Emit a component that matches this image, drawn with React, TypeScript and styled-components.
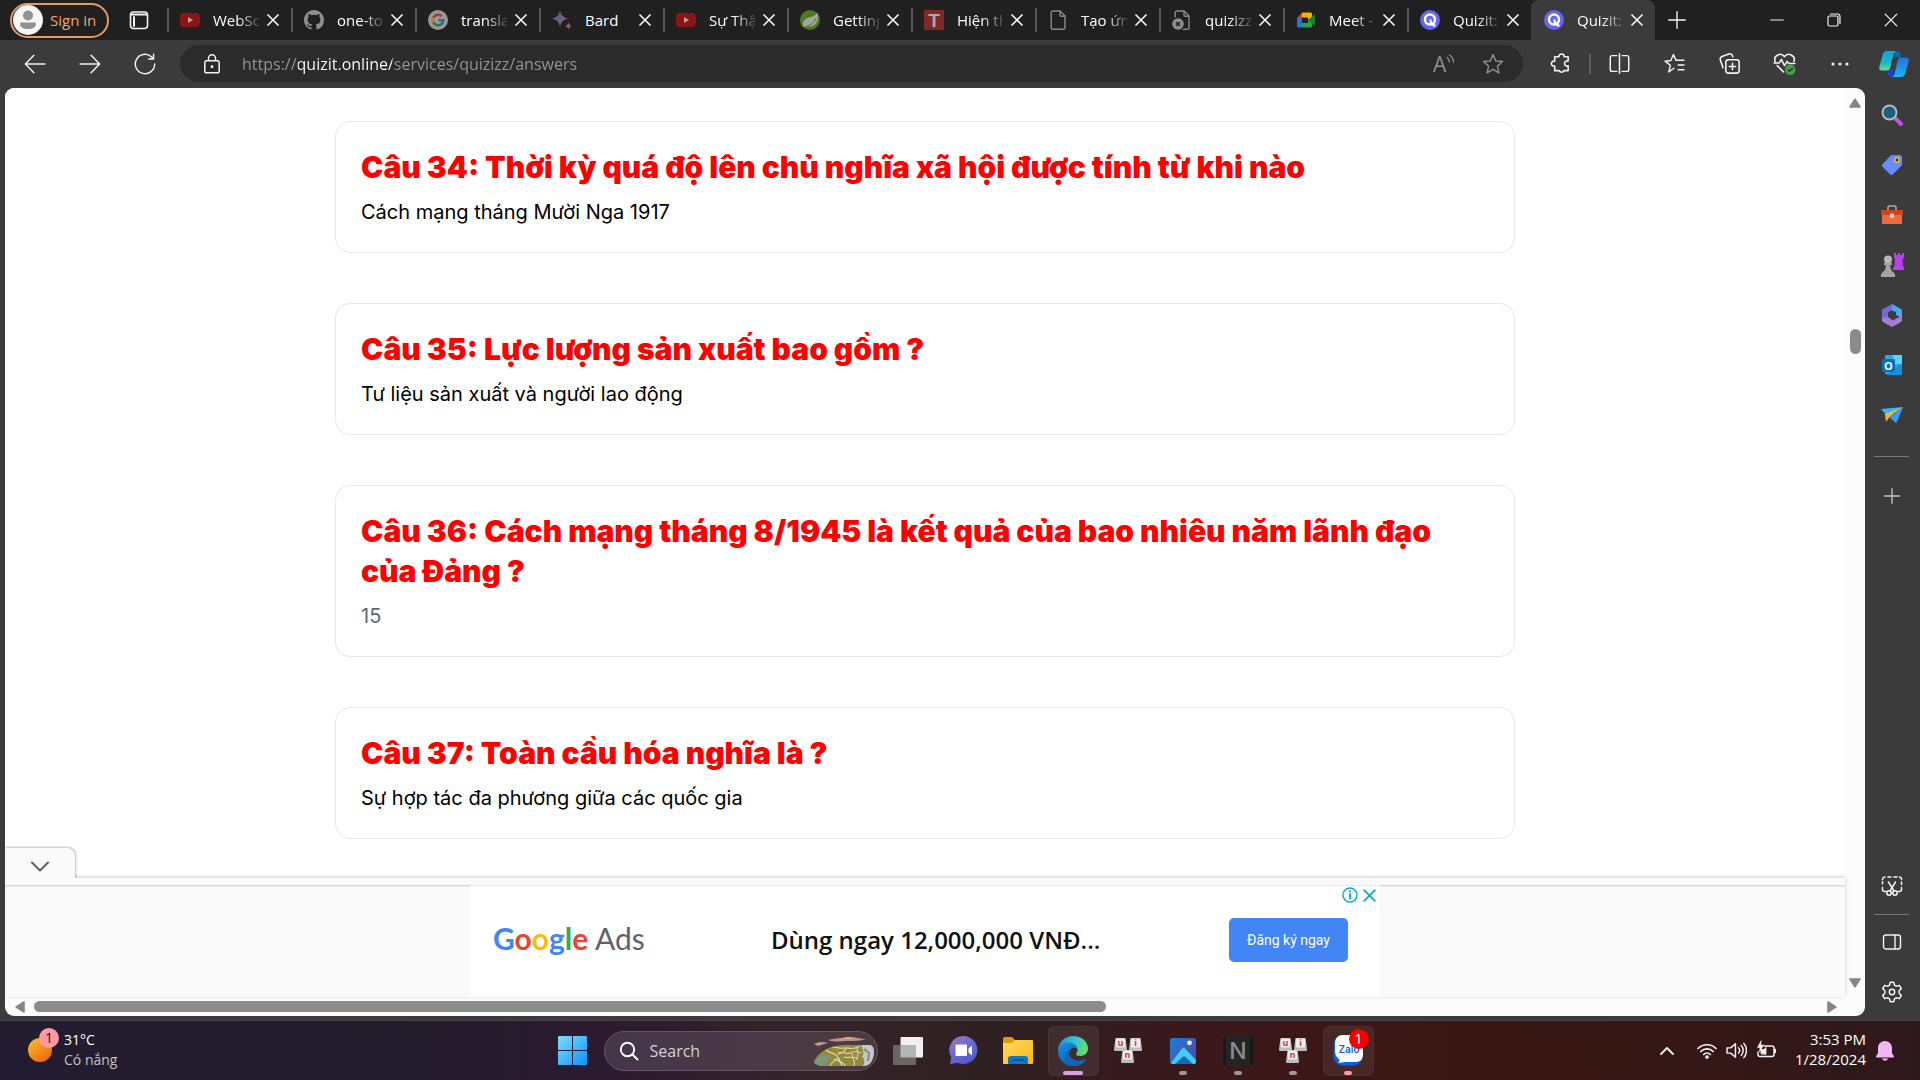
import React from "react";
import styled, { createGlobalStyle, css } from "styled-components";

const GlobalStyle = createGlobalStyle`
  *, *::before, *::after { box-sizing: border-box; }
  html, body { margin: 0; padding: 0; background: #3b3b3b; }
  body { font-family: "Segoe UI", "Open Sans", "Noto Sans", sans-serif; font-size: 14px; }
  button, input { font: inherit; color: inherit; }
  button { background: none; border: 0; padding: 0; cursor: pointer; }
  h2, p { margin: 0; }
  svg { display: block; flex: none; }
`;

/* ---------- browser frame ---------- */

const Shell = styled.div`
  display: flex;
  flex-direction: column;
  height: 100vh;
  overflow: hidden;
  background: #3b3b3b;
`;

const TabBar = styled.header`
  display: flex;
  align-items: stretch;
  height: 40px;
  flex: none;
  background: #202020;
  color: #fff;
`;

const SignIn = styled.button`
  display: flex;
  align-items: center;
  align-self: center;
  gap: 7px;
  width: 99px;
  height: 35px;
  margin: 0 12px 0 10px;
  padding-left: 1px;
  border: 2px solid #e59a63;
  border-radius: 18px;
  color: #f3a56d;
  font-size: 15px;
  white-space: nowrap;
`;

const IconButton = styled.button<{ $w?: number; $h?: number; $color?: string }>`
  display: flex;
  flex: none;
  align-items: center;
  justify-content: center;
  width: ${(p) => p.$w ?? 55}px;
  height: ${(p) => (p.$h ? `${p.$h}px` : "auto")};
  color: ${(p) => p.$color ?? "#f2f2f2"};
`;

const Tab = styled.div<{ $active?: boolean }>`
  display: flex;
  flex: none;
  align-items: center;
  width: 124px;
  padding-left: 13px;
  position: relative;
  ${(p) =>
    p.$active
      ? css`
          background: #3b3b3b;
          border-radius: 8px 8px 0 0;
        `
      : css`
          &::before {
            content: "";
            position: absolute;
            left: 0;
            top: 8px;
            width: 2px;
            height: 24px;
            background: #555;
          }
        `}
`;

const TabTitle = styled.span`
  width: 46px;
  margin: 0 7px 0 13px;
  overflow: hidden;
  white-space: nowrap;
  line-height: 24px;
  font-size: 15px;
  mask-image: linear-gradient(90deg, #000 24px, transparent 50px);
`;

const BardTitle = styled(TabTitle)`
  mask-image: none;
`;

const Push = styled.div`
  flex: 1;
`;

const Toolbar = styled.nav`
  display: flex;
  align-items: stretch;
  height: 48px;
  flex: none;
  padding: 5px 0 6px 7px;
`;

const AddressBar = styled.label`
  display: flex;
  flex: 1;
  align-items: center;
  min-width: 0;
  margin: 0 10px 0 8px;
  padding: 0 6px 0 22px;
  border-radius: 19px;
  background: #2b2b2b;
  color: #f2f2f2;
`;

const Address = styled.input`
  flex: 1;
  min-width: 0;
  height: 30px;
  margin-left: 20px;
  padding: 0;
  border: 0;
  outline: 0;
  font-size: 16px;
  background: linear-gradient(90deg, #969696 56px, #fff 56px, #fff 150px, #969696 150px);
  background-clip: text;
  -webkit-background-clip: text;
  -webkit-text-fill-color: transparent;
`;

const ToolDivider = styled.span`
  align-self: center;
  width: 2px;
  height: 20px;
  margin: 0 1px;
  background: #5c5c5c;
`;

const Body = styled.div`
  display: flex;
  flex: 1;
  min-height: 0;
  padding-left: 5px;
`;

const Viewport = styled.div`
  display: grid;
  flex: 1;
  min-width: 0;
  grid-template: minmax(0, 1fr) 19px / minmax(0, 1fr) 20px;
  margin-bottom: 4px;
  overflow: hidden;
  border-radius: 9px;
  background: #fcfcfc;
`;

/* ---------- page ---------- */

const Page = styled.div`
  display: flex;
  flex-direction: column;
  min-height: 0;
  background: #fff;
`;

const Answers = styled.main`
  display: flex;
  flex: 1;
  flex-direction: column;
  align-items: center;
  gap: 50px;
  min-height: 0;
  padding: 33px 20px 0;
  overflow: hidden;
`;

const Card = styled.article`
  display: flex;
  flex: none;
  flex-direction: column;
  gap: 9px;
  width: 100%;
  max-width: 1180px;
  padding: 25px 25px 24px;
  border: 1px solid #e5e7eb;
  border-radius: 15px;
  font-family: Inter, sans-serif;
`;

const Question = styled.h2`
  color: #f00;
  font-size: 30px;
  font-weight: 900;
  line-height: 40px;
`;

const Answer = styled.p<{ $muted?: boolean }>`
  color: ${(p) => (p.$muted ? "#5f6672" : "#000")};
  font-size: 20px;
  line-height: 32px;
`;

const AdDock = styled.aside`
  position: relative;
  flex: none;
  padding-top: 7px;
  background: #fafafa;
  box-shadow: 0 -1px 4px rgba(0, 0, 0, 0.2);
`;

const CollapseTab = styled.button`
  position: absolute;
  left: 0;
  top: -30px;
  display: flex;
  align-items: center;
  justify-content: center;
  width: 70px;
  height: 37px;
  border-radius: 0 8px 0 0;
  background: #fafafa;
  box-shadow: 1px -1px 2px rgba(0, 0, 0, 0.25);
  clip-path: inset(-4px -4px 7px 0);
  color: #616161;
`;

const AdStrip = styled.div`
  display: flex;
  justify-content: center;
  box-shadow: inset 0 2px 2px -1px rgba(0, 0, 0, 0.2);
`;

const Ad = styled.div`
  position: relative;
  display: flex;
  align-items: center;
  width: 910px;
  height: 112px;
  padding: 0 32px 3px 23px;
  border-top: 1px solid #e8e8e8;
  background: #fff;
  font-family: Lato, sans-serif;
`;

const AdLogo = styled.span`
  width: 278px;
  padding-bottom: 4px;
  color: #5f6368;
  font-size: 30px;
  line-height: 40px;
  white-space: nowrap;
`;

const Letter = styled.span<{ $c: string }>`
  color: ${(p) => p.$c};
  font-family: Lato, sans-serif;
  font-weight: 700;
`;

const AdText = styled.p`
  flex: 1;
  color: #111;
  font-family: "Open Sans", sans-serif;
  font-size: 24px;
  font-weight: 600;
  line-height: 32px;
  white-space: nowrap;
`;

const AdButton = styled.button`
  width: 119px;
  height: 44px;
  border-radius: 5px;
  background: #4285f4;
  color: #fff;
  font-family: Roboto, sans-serif;
  font-size: 14px;
`;

const AdChoices = styled.div`
  position: absolute;
  top: 0;
  right: 3px;
  display: flex;
  gap: 4px;
`;

/* ---------- scroll bars ---------- */

const VBar = styled.div`
  display: grid;
  grid-template-rows: 12px 221fr 25px 625fr 12px;
  justify-items: center;
  padding: 9px 0 8px;
`;

const VThumb = styled.div`
  grid-row: 3;
  width: 11px;
  border-radius: 6px;
  background: #8b8b8b;
`;

const HBar = styled.div`
  display: grid;
  grid-template-columns: 9px 10fr 1072fr 721fr 9px;
  align-items: center;
  padding: 0 9px 0 10px;
`;

const HThumb = styled.div`
  grid-column: 3;
  height: 11px;
  border-radius: 6px;
  background: #8b8b8b;
`;

const ArrowCell = styled.span<{ $last?: boolean; $across?: boolean }>`
  display: flex;
  align-items: center;
  justify-content: center;
  ${(p) => p.$last && (p.$across ? "grid-column: 5;" : "grid-row: 5;")}
`;

/* ---------- side bar ---------- */

const Sidebar = styled.nav`
  display: flex;
  flex: none;
  flex-direction: column;
  align-items: center;
  width: 55px;
  padding: 2px 2px 3px 0;
`;

const SideDivider = styled.hr<{ $tight?: boolean }>`
  width: 35px;
  height: 1px;
  margin: ${(p) => (p.$tight ? "3px 0 2px" : "16px 0 14px")};
  border: 0;
  background: #777;
`;

/* ---------- task bar ---------- */

const Taskbar = styled.footer`
  display: grid;
  grid-template-columns: 1fr auto 1fr;
  flex: none;
  height: 60px;
  border-top: 1px solid #494347;
  background: linear-gradient(
    90deg,
    #241c30 0%,
    #211d2d 20%,
    #2c1a30 31%,
    #35232a 42%,
    #2f2021 52%,
    #3c171b 64%,
    #3b1713 76%,
    #341716 90%,
    #2d191c 100%
  );
  color: #fff;
`;

const Weather = styled.button`
  display: flex;
  align-items: center;
  justify-self: start;
  gap: 4px;
  padding: 0 0 2px 24px;
  text-align: left;
`;

const WeatherText = styled.span`
  display: flex;
  flex-direction: column;
  font-size: 14px;
  line-height: 20px;
  color: #fff;
`;

const Dim = styled.span`
  color: #c4c1c9;
`;

const Dock = styled.div`
  display: flex;
  align-items: center;
`;

const SearchBox = styled.label`
  display: flex;
  align-items: center;
  gap: 11px;
  width: 274px;
  height: 40px;
  margin: 0 3px 0 4px;
  padding: 0 3px 0 14px;
  border: 1px solid #655564;
  border-radius: 20px;
  background: linear-gradient(90deg, #45354a, #4b3b47 60%, #493b3d);
`;

const SearchInput = styled.input`
  flex: 1;
  min-width: 0;
  padding: 0;
  border: 0;
  outline: 0;
  background: none;
  font-size: 16px;
  &::placeholder {
    color: #d6d0d6;
    opacity: 1;
  }
`;

const AppCell = styled.button<{ $open?: boolean; $mark?: string; $wide?: boolean }>`
  position: relative;
  display: flex;
  align-items: center;
  justify-content: center;
  width: 51px;
  height: 50px;
  margin: 0 2px;
  border-radius: 6px;
  ${(p) => p.$open && "background: rgba(255, 255, 255, 0.07); box-shadow: inset 0 0 0 1px rgba(255, 255, 255, 0.04);"}
  &::after {
    content: "";
    display: ${(p) => (p.$mark ? "block" : "none")};
    position: absolute;
    bottom: 1px;
    width: ${(p) => (p.$wide ? 20 : 8)}px;
    height: 4px;
    border-radius: 2px;
    background: ${(p) => p.$mark};
  }
`;

const Count = styled.span`
  position: absolute;
  top: 3px;
  right: 5px;
  width: 20px;
  height: 20px;
  border-radius: 10px;
  background: #f90000;
  font-size: 14px;
  line-height: 20px;
  text-align: center;
`;

const Tray = styled.div`
  display: flex;
  align-items: center;
  justify-content: flex-end;
  padding-right: 23px;
`;

const Clock = styled.time`
  margin: 0 7px 0 13px;
  padding-bottom: 3px;
  font-size: 15px;
  line-height: 20px;
  text-align: right;
  white-space: pre-line;
`;

const WeatherIcon = styled.span`
  position: relative;
  width: 36px;
  height: 40px;
`;

const WeatherCount = styled.span`
  position: absolute;
  top: -2px;
  right: 1px;
  width: 20px;
  height: 20px;
  border-radius: 10px;
  background: #ff98a2;
  color: #2a1014;
  font-size: 14px;
  line-height: 20px;
  text-align: center;
`;

/* ---------- drawings ---------- */

type LineProps = { s?: number; w?: number; box?: number; children: React.ReactNode };
const Line = ({ s = 20, w = 1.3, box = 20, children }: LineProps) => (
  <svg width={s} height={s} viewBox={`0 0 ${box} ${box}`} fill="none" stroke="currentColor" strokeWidth={w} strokeLinecap="round" strokeLinejoin="round" aria-hidden="true">
    {children}
  </svg>
);

const YouTube = () => (
  <svg width="20" height="20" viewBox="0 0 20 20">
    <rect x="0" y="3" width="20" height="14" rx="3.5" fill="#8a1416" />
    <path d="M8 7l5.2 3L8 13z" fill="#b9a0a0" />
  </svg>
);
const GitHub = () => (
  <svg width="20" height="20" viewBox="0 0 16 16" fill="#8f8f8f">
    <path d="M8 0C3.58 0 0 3.58 0 8c0 3.54 2.29 6.53 5.47 7.59.4.07.55-.17.55-.38 0-.19-.01-.82-.01-1.49-2.01.37-2.53-.49-2.69-.94-.09-.23-.48-.94-.82-1.13-.28-.15-.68-.52-.01-.53.63-.01 1.08.58 1.23.82.72 1.21 1.87.87 2.33.66.07-.52.28-.87.51-1.07-1.78-.2-3.64-.89-3.64-3.95 0-.87.31-1.59.82-2.15-.08-.2-.36-1.02.08-2.12 0 0 .67-.21 2.2.82a7.6 7.6 0 0 1 4 0c1.53-1.04 2.2-.82 2.2-.82.44 1.1.16 1.92.08 2.12.51.56.82 1.27.82 2.15 0 3.07-1.87 3.75-3.65 3.95.29.25.54.73.54 1.48 0 1.07-.01 1.93-.01 2.2 0 .21.15.46.55.38A8 8 0 0 0 16 8c0-4.42-3.58-8-8-8z" />
  </svg>
);
const GoogleMark = () => (
  <svg width="20" height="20" viewBox="0 0 20 20" fill="none" strokeWidth="2.6">
    <circle cx="10" cy="10" r="10" fill="#989898" />
    <path d="M13.7 6.2A5.3 5.3 0 0 0 5.3 7.6" stroke="#a5382f" />
    <path d="M5.3 7.6a5.3 5.3 0 0 0 0 4.8" stroke="#b08618" />
    <path d="M5.3 12.4a5.3 5.3 0 0 0 8.2 1.6" stroke="#2c7a3f" />
    <path d="M13.5 14a5.3 5.3 0 0 0 1.7-3.8H10.3" stroke="#3562a8" />
  </svg>
);
const BardMark = () => (
  <svg width="20" height="20" viewBox="0 0 20 20">
    <defs>
      <linearGradient id="bard" x1="0" y1="0" x2="1" y2="1">
        <stop offset="0.2" stopColor="#2f6ba0" />
        <stop offset="0.8" stopColor="#a2506a" />
      </linearGradient>
    </defs>
    <path d="M8 0c1 5 3 7 8 8.500c-5 1.500-7 3.500-8 8.500c-1-5-3-7-8-8.500c5-1.500 7-3.500 8-8.500z" fill="url(#bard)" />
    <path d="M16.500 12c.5 2.300 1.300 3.300 3.500 4c-2.200.7-3 1.700-3.500 4c-.5-2.300-1.300-3.300-3.500-4c2.200-.7 3-1.700 3.500-4z" fill="#a05568" />
  </svg>
);
const Spring = () => (
  <svg width="20" height="20" viewBox="0 0 20 20">
    <circle cx="10" cy="10" r="10" fill="#4d7a23" />
    <path d="M17.500 2.500c1.500 7-.5 14-8 14c-2 0-4 .3-5.500 1c-2.500-3-1-8 3.500-9.500c4-1.300 7-1 10-5.500z" fill="#a3a3a3" />
    <path d="M4 17c5-.5 10-4 12-9" stroke="#4d7a23" strokeWidth="1" fill="none" />
  </svg>
);
const TMark = () => (
  <svg width="20" height="20" viewBox="0 0 20 20">
    <rect width="20" height="20" fill="#7f2a24" />
    <text x="10" y="17" textAnchor="middle" fontFamily="Liberation Sans, sans-serif" fontWeight="700" fontSize="19" fill="#b0a5a4">T</text>
  </svg>
);
const Doc = ({ broken }: { broken?: boolean }) => (
  <svg width="20" height="20" viewBox="0 0 20 20" fill="none" stroke="#8a8a8a" strokeWidth="1.400">
    <path d="M5 1h7l5 5v11.500a1.800 1.800 0 0 1-1.800 1.800H5a1.800 1.800 0 0 1-1.800-1.800V2.800A1.800 1.800 0 0 1 5 1zM12 1v4a1.200 1.200 0 0 0 1.200 1.200H17" />
    {broken && (
      <>
        <circle cx="6" cy="14" r="6.500" fill="#8f8f8f" stroke="#202020" />
        <path d="M4 12l4 4M8 12l-4 4" stroke="#202020" strokeWidth="1.600" />
      </>
    )}
  </svg>
);
const Meet = () => (
  <svg width="20" height="20" viewBox="0 0 20 20">
    <path d="M1 8l5-5.500V8z" fill="#e3382c" />
    <path d="M6 2.500h8.500a1.500 1.500 0 0 1 1.500 1.500v5l-4 1V7.500H6z" fill="#f5b400" />
    <path d="M1 8h5v9.500H2.500A1.500 1.500 0 0 1 1 16z" fill="#2074e8" />
    <path d="M6 13h6v-3l4 1v5a1.500 1.500 0 0 1-1.500 1.500H6z" fill="#20a44b" />
    <path d="M12 10l6-5.200c.6-.4 1-.1 1 .5v9.400c0 .6-.4.9-1 .5z" fill="#168039" />
  </svg>
);
const Quizit = () => (
  <svg width="20" height="20" viewBox="0 0 20 20" fill="none">
    <circle cx="10" cy="10" r="10" fill="#6366f1" />
    <circle cx="10" cy="9.500" r="5" stroke="#fff" strokeWidth="2.400" />
    <path d="M10.500 10.500c.3 3 1.500 4.500 4 5" stroke="#fff" strokeWidth="2.300" strokeLinecap="round" />
  </svg>
);

const CloseX = ({ s = 12, w = 1.7 }: { s?: number; w?: number }) => (
  <Line s={s} box={12} w={w}>
    <path d="M1 1l10 10M11 1L1 11" />
  </Line>
);

const tabs: { title: string; icon: React.ReactNode }[] = [
  { title: "WebSoc", icon: <YouTube /> },
  { title: "one-to-", icon: <GitHub /> },
  { title: "transla", icon: <GoogleMark /> },
  { title: "Bard", icon: <BardMark /> },
  { title: "Sự Thậ", icon: <YouTube /> },
  { title: "Getting", icon: <Spring /> },
  { title: "Hiện th", icon: <TMark /> },
  { title: "Tạo ứn", icon: <Doc /> },
  { title: "quizizz", icon: <Doc broken /> },
  { title: "Meet -", icon: <Meet /> },
  { title: "Quizit:", icon: <Quizit /> },
  { title: "Quizit:", icon: <Quizit /> },
];

const STAR = "M10 1.500l2.500 5.700 6.200.6-4.700 4.100 1.400 6.100L10 14.800 4.600 18l1.400-6.100L1.300 7.800l6.200-.6z";

const Copilot = () => (
  <svg width="30" height="28" viewBox="0 0 30 28">
    <defs>
      <linearGradient id="cpA" x1="0" y1="0" x2="0" y2="1">
        <stop offset="0.2" stopColor="#12a5e4" />
        <stop offset="0.600" stopColor="#20b8c4" />
        <stop offset="1" stopColor="#68dd9c" />
      </linearGradient>
      <linearGradient id="cpB" x1="0" y1="0" x2="0" y2="1">
        <stop offset="0" stopColor="#2a6fe0" />
        <stop offset="1" stopColor="#16b7fa" />
      </linearGradient>
    </defs>
    <path d="M14 1h4c2 0 3 1 3.500 3L22 7h-6z" fill="#0a6aa0" />
    <path d="M8 19h7l-2 8c-2 0-3.500-1-4-3z" fill="#1741d8" />
    <path d="M8 1h9c-2 1-2.500 3-3 5l-2.500 11c-.6 2-1.500 3.500-3.500 3.500H3c-2.500 0-3.200-1.500-2.600-4L3.600 5C4.300 2.500 5.500 1 8 1z" fill="url(#cpA)" />
    <path d="M22 7.500h5c2.500 0 3.200 1.500 2.600 4l-3.200 11.500c-.7 2.500-1.900 4-4.400 4h-9c2-1 2.500-3 3-5l2.500-11c.6-2 1.500-3.500 3.500-3.500z" fill="url(#cpB)" />
  </svg>
);

const sideApps: { name: string; icon: React.ReactNode }[] = [
  {
    name: "Search",
    icon: (
      <svg width="22" height="22" viewBox="0 0 22 22">
        <path d="M15 15l5 5" stroke="#c94df5" strokeWidth="4" strokeLinecap="round" />
        <path d="M12.500 12.500l3 3" stroke="#8a8a8a" strokeWidth="2" />
        <circle cx="8.500" cy="8.500" r="7" fill="#1c5f80" stroke="#b9b9b9" strokeWidth="2" />
      </svg>
    ),
  },
  {
    name: "Shopping",
    icon: (
      <svg width="22" height="22" viewBox="0 0 22 22">
        <path d="M11 1h7.500A2.500 2.500 0 0 1 21 3.500V10c0 1-.3 1.500-1 2.200l-8 8c-1 1-2 1-3 0L1.700 13c-1-1-1-2 0-3l7.500-8c.6-.7 1-1 1.800-1z" fill="#6a8cfb" />
        <circle cx="16" cy="6" r="2.200" fill="#333" stroke="#ecc125" strokeWidth="1.500" />
      </svg>
    ),
  },
  {
    name: "Tools",
    icon: (
      <svg width="24" height="20" viewBox="0 0 24 20">
        <path d="M8 5V2.500A1.500 1.500 0 0 1 9.500 1h5A1.500 1.500 0 0 1 16 2.500V5" fill="none" stroke="#aaa" strokeWidth="1.600" />
        <rect x="2" y="9" width="20" height="10" rx="1" fill="#ef6a3d" />
        <rect x="1" y="5" width="22" height="5" rx="1" fill="#d5431a" />
        <rect x="10" y="8.500" width="4" height="4.500" rx="1" fill="#d6d6d6" />
      </svg>
    ),
  },
  {
    name: "Games",
    icon: (
      <svg width="24" height="24" viewBox="0 0 24 24">
        <path d="M14 0h2v2h2V0h2v2h2V0h2v5l-1.500 1 .5 7 1.500 2v2H13v-2l1.500-2 .5-7L14 5z" fill="#b840f0" />
        <circle cx="8" cy="6.500" r="4" fill="#b8b8b8" />
        <path d="M4 10h8v2h-2l1 5 4 4v3H1v-3l4-4 1-5H4z" fill="#a3a3a3" />
      </svg>
    ),
  },
  {
    name: "Microsoft 365",
    icon: (
      <svg width="22" height="23" viewBox="0 0 22 23">
        <path d="M11 0l9 5c1 .6 1 1 1 2v7l-6-3V8L7 5z" fill="#48a9ee" />
        <path d="M11 0L2 5C1 5.600 1 6 1 7v9l6-3V8.500l4-2.500z" fill="#6f6bd6" />
        <path d="M1 14v2c0 1 .3 1.400 1 2l8 4.500c.7.400 1.300.400 2 0l8-4.500c.7-.5 1-1 1-2v-5l-9 5.500-5-3.500z" fill="#a77cd0" />
      </svg>
    ),
  },
  {
    name: "Outlook",
    icon: (
      <svg width="22" height="22" viewBox="0 0 22 22">
        <rect x="4" y="1" width="17" height="19" rx="1" fill="#28a8ea" />
        <path d="M12 1h9v9h-9z" fill="#50d9ff" />
        <path d="M21 10v10a1 1 0 0 1-1 1H5l8-7z" fill="#1490df" />
        <rect x="1" y="5" width="13" height="13" rx="1" fill="#0f6cbd" />
        <text x="7.500" y="15.500" textAnchor="middle" fontFamily="Open Sans, sans-serif" fontWeight="700" fontSize="11" fill="#fff">O</text>
      </svg>
    ),
  },
  {
    name: "Drop",
    icon: (
      <svg width="22" height="18" viewBox="0 0 22 18">
        <path d="M0 3L22 1 5 9z" fill="#35b7f5" />
        <path d="M22 1L16 16l-7-5z" fill="#2f86ea" />
        <path d="M22 1L4 8l1 8c3-5 7-9 17-15z" fill="#f5b92e" />
        <path d="M22 1L8 11l7 6z" fill="#3c9af2" />
      </svg>
    ),
  },
];

const Keys = () => (
  <svg width="28" height="26" viewBox="0 0 28 26">
    {[
      [0, 0, "u"],
      [15, 0, "i"],
      [7, 12, "n"],
    ].map(([x, y, t]) => (
      <g key={t as string} transform={`translate(${x} ${y})`}>
        <path d="M1.500 0h10l1.500 11.500c0 1-.5 1.500-1.500 1.500h-10C.5 13 0 12.500 0 11.500z" fill="#bdbdbd" />
        <rect x="1.800" y="0.500" width="9.500" height="9" rx="1.500" fill="#ededed" />
        <text x="6.500" y="8" textAnchor="middle" fontFamily="Open Sans, sans-serif" fontWeight="700" fontSize="9" fill="#e8323c">{t}</text>
      </g>
    ))}
  </svg>
);

const Zalo = () => (
  <svg width="31" height="31" viewBox="0 0 31 31">
    <rect x="0.500" y="0.500" width="29" height="30" rx="9" fill="#0a62e8" />
    <path d="M10 0h12c6 0 8 3 8 8v11c0 6-3 8-8 8H12c-2 0-4 1-7 1 1-1 2-2 1-4-3-2-4-5-4-8V9c0-6 3-9 8-9z" fill="#fff" />
    <text x="16" y="18" textAnchor="middle" fontFamily="Inter, sans-serif" fontWeight="600" fontSize="10" fill="#0a62e8">Zalo</text>
  </svg>
);

const Earth = () => (
  <svg width="60" height="32" viewBox="0 0 60 32">
    <defs>
      <clipPath id="hill">
        <path d="M0 27C6 13 22 9 38 10h17c4 0 5 3 5 8-1 8-4 12-9 13H8C4 31 1 29 0 27z" />
      </clipPath>
    </defs>
    <path d="M14 5c6-2 12-1 18-3 5-1 8 1 20 2-6 2-12 2-18 2s-14 2-20-1z" fill="#b98f98" />
    <path d="M22 4c6 0 8-2 14-1 3 0 5 1 9 1z" fill="#e0a782" />
    <path d="M0 9c4-2 8-3 14-1-4 1-7 2-10 3z" fill="#c9977f" />
    <g clipPath="url(#hill)">
      <rect width="60" height="32" fill="#95893a" />
      <path d="M0 24c8-4 12-5 16-2l-6 9H0z" fill="#77987c" />
      <path d="M48 8c-2 6 4 8 0 14 4 2 2 8 0 10h12V8z" fill="#c2c4da" />
      <g fill="none" stroke="#d8d6b4" strokeWidth="1.100">
        <path d="M12 15c4 4 10 2 12 8s6 4 8 9M18 12c4 0 8 2 12 1s8 3 16-2M24 18c6-2 8 2 12 0s6-2 12 0M16 31c2-4 4-6 10-8M30 22c4 2 8-2 14 2M32 13c-2 5-4 5-8 6M38 18c0 6 4 8 2 13M20 24c4 2 6 1 8 7M44 12c-3 4 3 7-2 12" />
      </g>
      <path d="M50 14l5 4-1 8" stroke="#9a8b45" strokeWidth="2" fill="none" />
    </g>
  </svg>
);

const questions = [
  { q: "Câu 34: Thời kỳ quá độ lên chủ nghĩa xã hội được tính từ khi nào", a: "Cách mạng tháng Mười Nga 1917" },
  { q: "Câu 35: Lực lượng sản xuất bao gồm ?", a: "Tư liệu sản xuất và người lao động" },
  { q: "Câu 36: Cách mạng tháng 8/1945 là kết quả của bao nhiêu năm lãnh đạo của Đảng ?", a: "15", muted: true },
  { q: "Câu 37: Toàn cầu hóa nghĩa là ?", a: "Sự hợp tác đa phương giữa các quốc gia" },
];

const google: [string, string][] = [
  ["G", "#4285f4"],
  ["o", "#ea4335"],
  ["o", "#fbbc05"],
  ["g", "#4285f4"],
  ["l", "#34a853"],
  ["e", "#ea4335"],
];

const Triangle = ({ turn }: { turn: number }) => (
  <svg width="12" height="12" viewBox="0 0 12 12">
    <path d="M6 2.200L11 10H1z" fill="#858585" stroke="#858585" strokeWidth="1.600" strokeLinejoin="round" transform={`rotate(${turn} 6 6)`} />
  </svg>
);

export default function App() {
  return (
    <Shell>
      <GlobalStyle />
      <TabBar>
        <SignIn>
          <svg width="30" height="30" viewBox="0 0 30 30">
            <circle cx="15" cy="15" r="15" fill="#f7f7f7" />
            <circle cx="15" cy="10.500" r="5" fill="#929292" />
            <path d="M8 17.500h14c.8 0 1 .4 1 1.200C23 22.500 19.500 24 15 24s-8-1.500-8-5.300c0-.8.200-1.200 1-1.200z" fill="#929292" />
          </svg>
          Sign in
        </SignIn>
        <IconButton $w={36} aria-label="Workspaces">
          <Line s={20} w={1.6}>
            <rect x="1.500" y="2" width="17" height="16.500" rx="3" />
            <path d="M2 4.500h16M5 7v9" strokeWidth="2" />
          </Line>
        </IconButton>
        <IconButton as="span" $w={10} />
        {tabs.map((t, i) => (
          <Tab key={i} $active={i === tabs.length - 1}>
            {t.icon}
            {t.title === "Bard" ? <BardTitle>{t.title}</BardTitle> : <TabTitle>{t.title}</TabTitle>}
            <IconButton $w={14} $h={24} aria-label="Close tab">
              <CloseX />
            </IconButton>
          </Tab>
        ))}
        <IconButton $w={44} aria-label="New tab">
          <Line s={18} box={18} w={1.4}>
            <path d="M9 0.700v16.600M.7 9h16.600" />
          </Line>
        </IconButton>
        <Push />
        <IconButton $w={57} aria-label="Minimize">
          <Line s={14} box={14} w={1.2}>
            <path d="M.7 7h12.600" />
          </Line>
        </IconButton>
        <IconButton $w={57} aria-label="Restore">
          <Line s={14} box={14} w={1.2}>
            <rect x="1" y="3" width="10" height="10" rx="1.500" />
            <path d="M3.500 1h7A2.500 2.500 0 0 1 13 3.500v7" />
          </Line>
        </IconButton>
        <IconButton $w={58} aria-label="Close">
          <CloseX s={14} w={1.1} />
        </IconButton>
      </TabBar>

      <Toolbar>
        <IconButton aria-label="Back">
          <Line s={22}>
            <path d="M19 10H1.500M9 2L1.200 10 9 18" />
          </Line>
        </IconButton>
        <IconButton aria-label="Forward">
          <Line s={22}>
            <path d="M1 10h17.500M11 2l7.800 8L11 18" />
          </Line>
        </IconButton>
        <IconButton aria-label="Refresh">
          <Line s={22}>
            <path d="M18.800 10a8.800 8.800 0 1 1-3-6.600l1.700 1.800M17.800 1v4.500h-4.500" />
          </Line>
        </IconButton>
        <AddressBar>
          <Line s={20} w={1.5}>
            <rect x="2.800" y="6.800" width="14.400" height="12" rx="1.800" />
            <path d="M6.500 6.500V4.200a3.500 3.500 0 0 1 7 0v2.300" />
            <circle cx="10" cy="12.800" r="0.700" fill="currentColor" />
          </Line>
          <Address aria-label="Address" defaultValue="https://quizit.online/services/quizizz/answers" />
          <IconButton $w={49} $color="#8f8f8f" aria-label="Read aloud">
            <svg width="22" height="22" viewBox="0 0 22 22" fill="none" stroke="currentColor" strokeWidth="1.300" strokeLinecap="round">
              <text x="0" y="19" fontFamily="Open Sans, sans-serif" fontSize="21" fontWeight="400" fill="currentColor" stroke="none">A</text>
              <path d="M14 4.500c1.500 1 2.300 2.500 2.400 4.500M16.500 2c2.400 1.500 3.800 4 4 7" />
            </svg>
          </IconButton>
          <IconButton $w={49} $color="#8f8f8f" aria-label="Add to favorites">
            <Line s={22}>
              <path d={STAR} />
            </Line>
          </IconButton>
        </AddressBar>
        <IconButton aria-label="Extensions">
          <Line s={21} w={1.5}>
            <path d="M4.500 3.500h4a2.500 2.500 0 0 1 5 0h3.800v4.200a2.500 2.500 0 1 0 0 4.600v4.500h-4a2.500 2.500 0 0 1-4.600 0H4.500v-4.300a2.500 2.500 0 1 1 0-4.800z" />
          </Line>
        </IconButton>
        <ToolDivider />
        <IconButton aria-label="Split screen">
          <Line s={21} w={1.4}>
            <path d="M7.500 2.500H3A1.800 1.800 0 0 0 1.200 4.300v11.400A1.800 1.800 0 0 0 3 17.500h4.500M12.500 2.500H17a1.800 1.800 0 0 1 1.800 1.800v11.400a1.800 1.800 0 0 1-1.800 1.800h-4.500M10 .8v18.400" />
          </Line>
        </IconButton>
        <IconButton aria-label="Favorites">
          <Line s={21} w={1.4}>
            <path d="M9.500 14.500L4.600 18l1.400-6.300L1 7.800l5.500-.6L9 1.500l2.500 5.500h7.500M13.500 11.500h5.500M13.500 16h5.500" />
          </Line>
        </IconButton>
        <IconButton aria-label="Collections">
          <Line s={21} w={1.5}>
            <rect x="6.500" y="6.500" width="12.700" height="12.700" rx="2.500" />
            <path d="M12.800 9.800v6M9.800 12.800h6M3.800 14L1.200 6.500C.9 5 1.400 4 2.800 3.300L9.500.9c1.500-.4 2.500 0 3.200 1.400l.5 1.300" />
          </Line>
        </IconButton>
        <IconButton aria-label="Browser essentials">
          <Line s={23} w={1.5} box={22}>
            <path d="M2 9C0 3 8 0 11 4.500C14 0 22 3 20 9M4 13l6 6M1 10.500h5l2-3.500 3 6 2.500-4 1.500 2h6" />
            <circle cx="16.500" cy="17" r="5" fill="#46a049" stroke="none" />
            <path d="M14.300 17l1.500 1.500 3-3" stroke="#203a20" strokeWidth="1.300" />
          </Line>
        </IconButton>
        <IconButton aria-label="Settings and more">
          <svg width="18" height="4" viewBox="0 0 18 4" fill="currentColor">
            <circle cx="2" cy="2" r="1.600" />
            <circle cx="9" cy="2" r="1.600" />
            <circle cx="16" cy="2" r="1.600" />
          </svg>
        </IconButton>
        <IconButton $w={53} aria-label="Copilot">
          <Copilot />
        </IconButton>
      </Toolbar>

      <Body>
        <Viewport>
          <Page>
            <Answers>
              {questions.map((item) => (
                <Card key={item.q}>
                  <Question>{item.q}</Question>
                  <Answer $muted={item.muted}>{item.a}</Answer>
                </Card>
              ))}
            </Answers>
            <AdDock>
              <CollapseTab aria-label="Collapse ad">
                <Line s={18} box={18} w={2}>
                  <path d="M1 4.500l8 8 8-8" />
                </Line>
              </CollapseTab>
              <AdStrip>
                <Ad>
                  <AdLogo>
                    {google.map(([ch, c], i) => (
                      <Letter key={i} $c={c}>{ch}</Letter>
                    ))}{" "}
                    Ads
                  </AdLogo>
                  <AdText>Dùng ngay 12,000,000 VNĐ...</AdText>
                  <AdButton>Đăng ký ngay</AdButton>
                  <AdChoices>
                    <IconButton $w={17} $h={18} $color="#00aecd" aria-label="Ad information">
                      <Line s={16} box={16} w={1.4}>
                        <circle cx="8" cy="8" r="7" />
                        <path d="M8 7v4.500M8 4.200v.4" strokeWidth="1.900" />
                      </Line>
                    </IconButton>
                    <IconButton $w={15} $h={18} $color="#00aecd" aria-label="Close ad">
                      <CloseX s={13} w={1.5} />
                    </IconButton>
                  </AdChoices>
                </Ad>
              </AdStrip>
            </AdDock>
          </Page>
          <VBar aria-hidden="true">
            <ArrowCell><Triangle turn={0} /></ArrowCell>
            <VThumb />
            <ArrowCell $last><Triangle turn={180} /></ArrowCell>
          </VBar>
          <HBar aria-hidden="true">
            <ArrowCell><Triangle turn={270} /></ArrowCell>
            <HThumb />
            <ArrowCell $last $across><Triangle turn={90} /></ArrowCell>
          </HBar>
        </Viewport>

        <Sidebar>
          {sideApps.map((app) => (
            <IconButton key={app.name} $h={50} aria-label={app.name}>{app.icon}</IconButton>
          ))}
          <SideDivider />
          <IconButton $h={50} $color="#c9c9c9" aria-label="Customize">
            <Line s={16} box={16}>
              <path d="M8 .7v14.600M.7 8h14.600" />
            </Line>
          </IconButton>
          <Push />
          <IconButton $h={50} aria-label="Screenshot">
            <Line s={22} box={22} w={1.5}>
              <path d="M5 16.500H3.500a2 2 0 0 1-2-2v-2M1.500 9V6.500M1.500 4.500a2.500 2.500 0 0 1 2.500-2.500M7 2h3M13 2h3M18.500 2a2.500 2.500 0 0 1 2 2.500M20.500 7v2.500M20.500 12.500v2a2 2 0 0 1-2 2H17" />
              <path d="M7.500 7l5.500 9M14.500 7L9 16" />
              <circle cx="8" cy="18" r="2.200" />
              <circle cx="14" cy="18" r="2.200" />
            </Line>
          </IconButton>
          <SideDivider $tight />
          <IconButton $h={50} aria-label="Side panel">
            <Line s={20} w={1.4}>
              <rect x="1.500" y="3" width="17" height="14" rx="2.500" />
              <path d="M13 3v14" />
            </Line>
          </IconButton>
          <IconButton $h={50} aria-label="Settings">
            <Line s={22} box={22} w={1.5}>
              <circle cx="11" cy="11" r="2.700" />
              <path d="M9.300 1.200h3.400l.8 3 1.900 1.100 3-.9 1.900 3.200-2.200 2.200v2.400l2.200 2.200-1.900 3.200-3-.9-1.900 1.100-.8 3H9.300l-.8-3-1.900-1.100-3 .9-1.900-3.200 2.200-2.200V9.800L1.700 7.600l1.900-3.200 3 .9 1.900-1.100z" />
            </Line>
          </IconButton>
        </Sidebar>
      </Body>

      <Taskbar>
        <Weather>
          <WeatherIcon>
            <svg width="28" height="40" viewBox="0 0 28 40">
              <defs>
                <linearGradient id="sun" x1="0" y1="0" x2="0.800" y2="1">
                  <stop offset="0" stopColor="#f7c433" />
                  <stop offset="1" stopColor="#ef6508" />
                </linearGradient>
              </defs>
              <circle cx="16" cy="20" r="12" fill="url(#sun)" />
            </svg>
            <WeatherCount>1</WeatherCount>
          </WeatherIcon>
          <WeatherText>
            <span>31°C</span>
            <Dim>Có nắng</Dim>
          </WeatherText>
        </Weather>

        <Dock>
          <AppCell aria-label="Start">
            <svg width="29" height="29" viewBox="0 0 29 29">
              <defs>
                <linearGradient id="win" x1="0" y1="0" x2="1" y2="1">
                  <stop offset="0" stopColor="#80dcff" />
                  <stop offset="1" stopColor="#0a93fb" />
                </linearGradient>
              </defs>
              <path d="M1 0h13v14H0V1a1 1 0 0 1 1-1zM15 0h13a1 1 0 0 1 1 1v13H15zM0 15h14v14H1a1 1 0 0 1-1-1zM15 15h14v13a1 1 0 0 1-1 1H15z" fill="url(#win)" />
            </svg>
          </AppCell>
          <SearchBox>
            <Line s={20} w={1.9}>
              <circle cx="8.500" cy="8.500" r="6.700" />
              <path d="M13.500 13.500l5 5" />
            </Line>
            <SearchInput aria-label="Search" placeholder="Search" />
            <Earth />
          </SearchBox>
          <AppCell aria-label="Task view">
            <svg width="30" height="28" viewBox="0 0 30 28">
              <rect x="7.500" y="0" width="22.500" height="20.500" rx="1" fill="#f0f0f0" />
              <rect x="0" y="8" width="23" height="20" rx="1" fill="#696665" />
              <path d="M7.500 8H23v12.500H7.500z" fill="#b5b3b3" />
            </svg>
          </AppCell>
          <AppCell aria-label="Chat">
            <svg width="29" height="29" viewBox="0 0 29 29">
              <defs>
                <linearGradient id="chat" x1="0" y1="0" x2="0.700" y2="1">
                  <stop offset="0" stopColor="#a477b5" />
                  <stop offset="0.500" stopColor="#6a6bd3" />
                  <stop offset="1" stopColor="#5059cc" />
                </linearGradient>
              </defs>
              <path d="M14.500 0a14 14 0 1 1-6 26.700L1 28.300 2.200 21A14 14 0 0 1 14.500 0z" fill="url(#chat)" />
              <rect x="6.500" y="8.500" width="11.500" height="11.500" rx="1" fill="#fff" />
              <path d="M19.500 12.500l3.500-3v10l-3.500-3z" fill="#fff" />
            </svg>
          </AppCell>
          <AppCell aria-label="File Explorer">
            <svg width="30" height="27" viewBox="0 0 30 27">
              <defs>
                <linearGradient id="fold" x1="0" y1="0" x2="1" y2="1">
                  <stop offset="0" stopColor="#ffd965" />
                  <stop offset="1" stopColor="#fbb90f" />
                </linearGradient>
              </defs>
              <path d="M0 1.500A1.500 1.500 0 0 1 1.500 0H9l3 3h3v5H0z" fill="#dd9b06" />
              <path d="M0 6h9l3-3h17a1 1 0 0 1 1 1v22a1 1 0 0 1-1 1H1a1 1 0 0 1-1-1z" fill="url(#fold)" />
              <path d="M5 27v-5a3 3 0 0 1 3-3h14a3 3 0 0 1 3 3v5z" fill="#1176c4" />
              <path d="M9 23h12" stroke="#0a4f8e" strokeWidth="1.500" />
            </svg>
          </AppCell>
          <AppCell $open $mark="#dc9fe6" $wide aria-label="Microsoft Edge">
            <svg width="30" height="30" viewBox="0 0 30 30">
              <defs>
                <linearGradient id="edA" x1="0" y1="0.300" x2="1" y2="0.600">
                  <stop offset="0" stopColor="#2494dd" />
                  <stop offset="0.500" stopColor="#33c3d8" />
                  <stop offset="1" stopColor="#69e157" />
                </linearGradient>
                <linearGradient id="edB" x1="0" y1="0" x2="0.500" y2="1">
                  <stop offset="0" stopColor="#1795e2" />
                  <stop offset="1" stopColor="#0c5fb4" />
                </linearGradient>
              </defs>
              <path d="M.2 13C1.300 5 7.500 0 15 0c9 0 15 6 15 12.500 0 4.500-3.500 7.500-7.500 7.500-3 0-4.500-1-4.500-2 0-.8 1.500-1.500 1.500-4C19 9 14.500 7 10 7.500 5.500 8 2 10 .2 13z" fill="url(#edA)" />
              <path d="M0 15c0-5 4-8.500 10-8.500 5 0 9.500 3 9.500 7C18 10.500 11 11 10.500 18c0 6 5 9 9.500 9-2 2-4 3-6 3C6 30 0 23 0 15z" fill="url(#edB)" />
              <path d="M13.500 12.500c-3 3-3 7 0 9.500 4 3.500 9.500 3 13.500 1.200.8-.4 1.200.3.800.9C24.500 29 19 31 14 29.800 8 27 5.500 20 9 15.500c1.300-1.700 3-2.500 4.500-3z" fill="#1565bb" />
            </svg>
          </AppCell>
          <AppCell aria-label="UniKey"><Keys /></AppCell>
          <AppCell $mark="#a29396" aria-label="Photos">
            <svg width="26" height="26" viewBox="0 0 26 26">
              <defs>
                <linearGradient id="pho" x1="0" y1="0" x2="1" y2="0.700">
                  <stop offset="0" stopColor="#1880d8" />
                  <stop offset="1" stopColor="#5348a5" />
                </linearGradient>
              </defs>
              <rect width="26" height="26" rx="2.500" fill="url(#pho)" />
              <path d="M1 25L12 10.500c1-1.300 2-1.300 3 0L26 22v1.500A2.500 2.500 0 0 1 23.500 26h-21z" fill="#42cdf6" />
              <path d="M5 26l7.500-7c1-.8 2-.8 3 0l7.500 7z" fill="#1469bd" />
              <circle cx="19.500" cy="4.800" r="2.400" fill="#f1f1f1" />
            </svg>
          </AppCell>
          <AppCell $mark="#a29396" aria-label="NitroSense">
            <svg width="30" height="30" viewBox="0 0 30 30">
              <rect width="30" height="30" rx="4" fill="#181818" />
              <rect x="3" width="24" height="30" fill="#242424" />
              <text x="15" y="23" textAnchor="middle" fontFamily="Inter, sans-serif" fontWeight="500" fontSize="23" fill="#8a8a8a">N</text>
            </svg>
          </AppCell>
          <AppCell $mark="#a29396" aria-label="UniKey settings"><Keys /></AppCell>
          <AppCell $open $mark="#ff99a4" aria-label="Zalo">
            <Zalo />
            <Count>1</Count>
          </AppCell>
        </Dock>

        <Tray>
          <IconButton $w={50} $h={40} aria-label="Show hidden icons">
            <Line s={14} box={14} w={1.9}>
              <path d="M1 10l6-6 6 6" />
            </Line>
          </IconButton>
          <IconButton $w={30} $h={40} aria-label="Network">
            <Line s={20} w={1.7}>
              <path d="M1 7.500a12.700 12.700 0 0 1 18 0M3.800 10.500a8.800 8.800 0 0 1 12.400 0M6.700 13.500a4.700 4.700 0 0 1 6.600 0" />
              <circle cx="10" cy="16" r="1" fill="currentColor" />
            </Line>
          </IconButton>
          <IconButton $w={30} $h={40} aria-label="Volume">
            <Line s={21} w={1.4}>
              <path d="M1 7.500v5h3.500L9 16.500v-13L4.500 7.500zM12 7.500c1.300 1.500 1.300 3.500 0 5M14.500 5.300c2.500 2.700 2.500 6.700 0 9.400M17 3.200c3.300 4 3.300 9.600 0 13.600" />
            </Line>
          </IconButton>
          <IconButton $w={30} $h={40} aria-label="Battery">
            <Line s={21} box={21} w={1.5}>
              <path d="M8 6h8a2 2 0 0 1 2 2v6.500a2 2 0 0 1-2 2H4a2 2 0 0 1-2-2V12M19.300 9.500v3" />
              <path d="M5 13.500V9.500h3l2-2v6.500z" fill="currentColor" strokeWidth="0.800" />
              <path d="M5 1L1.500 7.500H4L3.500 12 7.500 5H5z" fill="currentColor" strokeWidth="0.600" />
            </Line>
          </IconButton>
          <Clock dateTime="2024-01-28T15:53">{"3:53 PM\n1/28/2024"}</Clock>
          <IconButton $w={24} $h={40} $color="#efb8f4" aria-label="Notifications">
            <svg width="18" height="20" viewBox="0 0 18 20" fill="currentColor">
              <path d="M9 0c4 0 7 3 7 7v5l2 3.500c0 .6-.3 1-1 1H1c-.7 0-1-.4-1-1L2 12V7c0-4 3-7 7-7zM6 17.500h6c-.4 1.500-1.500 2.200-3 2.200s-2.600-.7-3-2.200z" />
            </svg>
          </IconButton>
        </Tray>
      </Taskbar>
    </Shell>
  );
}
